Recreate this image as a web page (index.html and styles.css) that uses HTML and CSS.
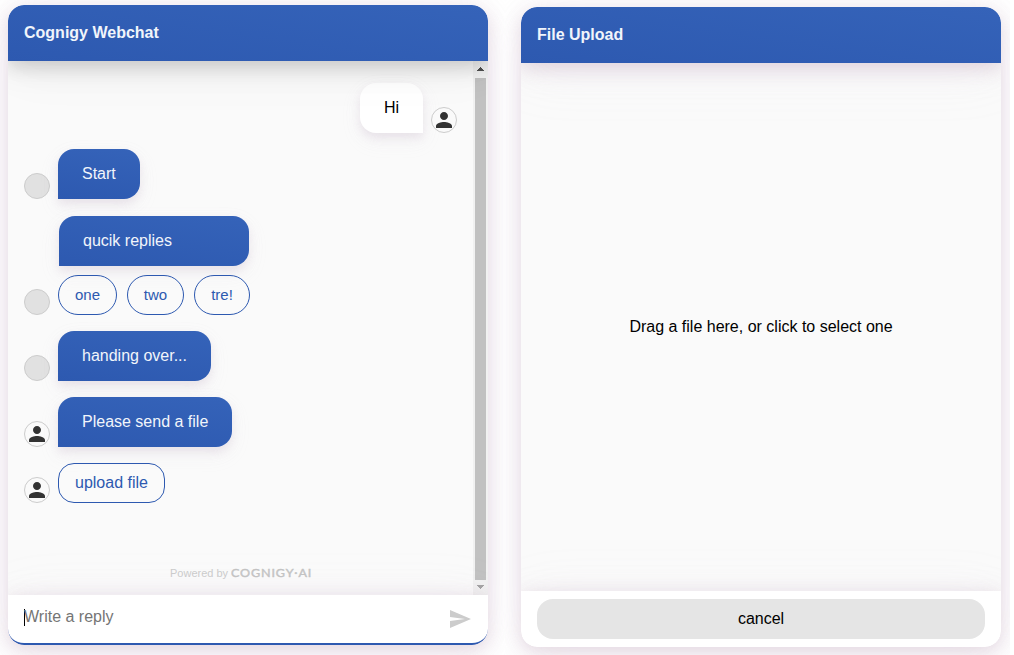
FILE: index.html
```html
<!DOCTYPE html>
<html lang="en">
<head>
<meta charset="utf-8">
<title>Cognigy Webchat</title>
<link rel="stylesheet" href="styles.css">
</head>
<body>
<svg class="defs" width="0" height="0">
  <symbol id="person" viewBox="0 0 24 24"><path d="M12 12c2.21 0 4-1.79 4-4s-1.79-4-4-4-4 1.790-4 4 1.790 4 4 4zm0 2c-2.670 0-8 1.340-8 4v2h16v-2c0-2.660-5.330-4-8-4z"/></symbol>
</svg>
<main class="stage">
  <div class="side side-chat">
    <section class="panel">
      <header class="header header-chat">Cognigy Webchat</header>
      <div class="history">
        <div class="messages">
          <div class="row row-user">
            <div class="bubble bubble-user">Hi</div>
            <div class="avatar"><svg><use href="#person"/></svg></div>
          </div>
          <div class="row"><div class="avatar avatar-empty"></div><div class="bubble w-start">Start</div></div>
          <div class="row">
            <div class="avatar avatar-empty"></div>
            <div class="quick">
              <div class="bubble">qucik replies</div>
              <div class="replies">
                <button class="reply w-one">one</button>
                <button class="reply w-two">two</button>
                <button class="reply w-tre">tre!</button>
              </div>
            </div>
          </div>
          <div class="row"><div class="avatar avatar-empty"></div><div class="bubble w-handing">handing over...</div></div>
          <div class="row"><div class="avatar"><svg><use href="#person"/></svg></div><div class="bubble w-please">Please send a file</div></div>
          <div class="row"><div class="avatar"><svg><use href="#person"/></svg></div><button class="reply reply-upload">upload file</button></div>
          <div class="powered">Powered by
            <svg class="wordmark" width="82" height="12"><text x="0" y="10" transform="scale(1.14 1)" textLength="70.5" lengthAdjust="spacing">COGNIGY·AI</text></svg>
          </div>
        </div>
        <div class="scrollbar">
          <svg class="arrow" viewBox="0 0 15 17"><path d="M4 10h7v-1h-1v-1h-1v-1h-1v-1h-1v1h-1v1h-1v1h-1z" fill="#505050"/></svg>
          <div class="thumb"></div>
          <svg class="arrow arrow-down" viewBox="0 0 15 15"><path d="M4 5h7v1h-1v1h-1v1h-1v1h-1v-1h-1v-1h-1v-1h-1z" fill="#a3a3a3"/></svg>
        </div>
      </div>
      <footer class="composer">
        <span class="caret"></span><span class="placeholder">Write a reply</span>
        <svg class="send" viewBox="0 0 21 18"><path d="M0 18 21 9 0 0v7l15 2-15 2z"/></svg>
      </footer>
    </section>
  </div>
  <div class="side side-upload">
    <section class="panel">
      <header class="header header-upload">File Upload</header>
      <div class="dropzone">Drag a file here, or click to select one</div>
      <footer class="actions"><button class="cancel">cancel</button></footer>
    </section>
  </div>
</main>
</body>
</html>
```
FILE: styles.css
```css
* { box-sizing: border-box; }
:root {
  --lift: 0 5px 18px rgba(151,100,140,.19), 0 5px 32px rgba(208,185,203,.2), 0 8px 58px rgba(216,212,221,.1);
}
body { margin: 0; background: #fff; color: #000; font: 16px/18px "Liberation Sans", Arial, sans-serif; }
button { font: inherit; padding: 0; margin: 0; border: 0; }
.defs { position: absolute; }
.stage { display: flex; width: 1014px; height: 655px; overflow: hidden; }
.side { height: 655px; overflow: hidden; flex: none; }
.side-chat { width: 505px; padding: 5px 0 0 8px; }
.side-upload { width: 505px; padding: 7px 0 0 16px; }
.panel {
  display: flex; flex-direction: column; width: 480px; height: 640px; border-radius: 16px; background: #fafafa;
  box-shadow: var(--lift);
}
.header {
  position: relative; z-index: 2; flex: none; height: 56px; padding: 19px 16px; border-radius: 16px 16px 0 0;
  font-weight: 700; color: #f1f5fb; background: linear-gradient(188deg, #3563b9, #2d59b0);
  clip-path: inset(0 0 -90px 0 round 16px 16px 0 0);
}
.header-chat { box-shadow: 0 5px 18px rgba(0,0,0,.12), 0 5px 32px rgba(0,0,0,.1), 0 8px 58px rgba(0,0,0,.04); }
.header-upload { box-shadow: var(--lift); }
.history { display: flex; flex: 1; min-height: 0; }
.messages { display: flex; flex-direction: column; gap: 16px; width: 465px; padding: 22px 16px 0; }
.row { display: flex; align-items: flex-end; gap: 8px; }
.row-user { justify-content: flex-end; }
.avatar { display: grid; place-items: center; width: 26px; height: 26px; flex: none; border: 1px solid #ccc; border-radius: 50%; background: #fafafa; }
.avatar svg { width: 24px; height: 24px; fill: #333; }
.avatar-empty { background: #e1e1e1; }
.bubble {
  height: 50px; padding: 16px 24px; border-radius: 16px 16px 16px 0; white-space: nowrap;
  color: #f1f5fb; background: linear-gradient(188deg, #3563b9, #2d59b0);
  box-shadow: 0 5px 9px rgba(151,110,150,.1), 0 5px 16px rgba(203,190,210,.1), 0 8px 20px rgba(216,212,221,.1);
}
.bubble-user { width: 63px; color: #000; background: #fff; border-radius: 16px 16px 0 16px; }
.w-start { width: 82px; }
.w-handing { width: 153px; }
.w-please { width: 174px; }
.quick { display: flex; flex-direction: column; gap: 9px; width: 192px; padding-top: 1px; }
.quick .bubble { margin: 0 1px; }
.replies { display: flex; gap: 10px; }
.reply { height: 40px; border: 1px solid #2d59b0; border-radius: 20px; background: transparent; color: #2d59b0; font-size: 15px; white-space: nowrap; }
.w-one { width: 59px; }
.w-two { width: 57px; }
.w-tre { width: 56px; }
.reply-upload { width: 107px; border-radius: 16px; font-size: 16px; }
.powered { display: flex; align-items: center; gap: 3px; height: 14px; margin: 47px 0 0 146px; font-size: 11px; line-height: 14px; color: #ccc; white-space: nowrap; }
.wordmark { flex: none; }
.wordmark text { font: 11px Lato, sans-serif; fill: #c4c4c4; stroke: #c4c4c4; stroke-width: .4; }
.scrollbar { display: flex; flex-direction: column; align-items: center; width: 15px; background: #f1f1f1; }
.arrow { width: 15px; height: 17px; flex: none; }
.arrow-down { height: 15px; }
.thumb { flex: 1; width: 11px; background: #c1c1c1; }
.composer {
  position: relative; display: flex; flex: none; height: 50px; padding: 13px 17px 0 16px; color: #757575; background: #fff;
  border-bottom: 2px solid #2d59b0; border-radius: 0 0 16px 16px;
  box-shadow: var(--lift); clip-path: inset(-60px 0 0 0 round 0 0 16px 16px);
}
.caret { width: 1px; height: 17px; margin: 1px -1px 0 0; background: #000; }
.placeholder { flex: 1; }
.send { width: 21px; height: 18px; margin-top: 2px; fill: #ccc; }
.dropzone { display: grid; place-items: center; flex: 1; }
.actions {
  flex: none; height: 56px; padding: 8px 16px; background: #fff; border-radius: 0 0 16px 16px;
  box-shadow: var(--lift); clip-path: inset(-60px 0 0 0 round 0 0 16px 16px);
}
.cancel { display: block; width: 448px; height: 40px; border-radius: 16px; background: #e5e5e5; color: #000; }
```
